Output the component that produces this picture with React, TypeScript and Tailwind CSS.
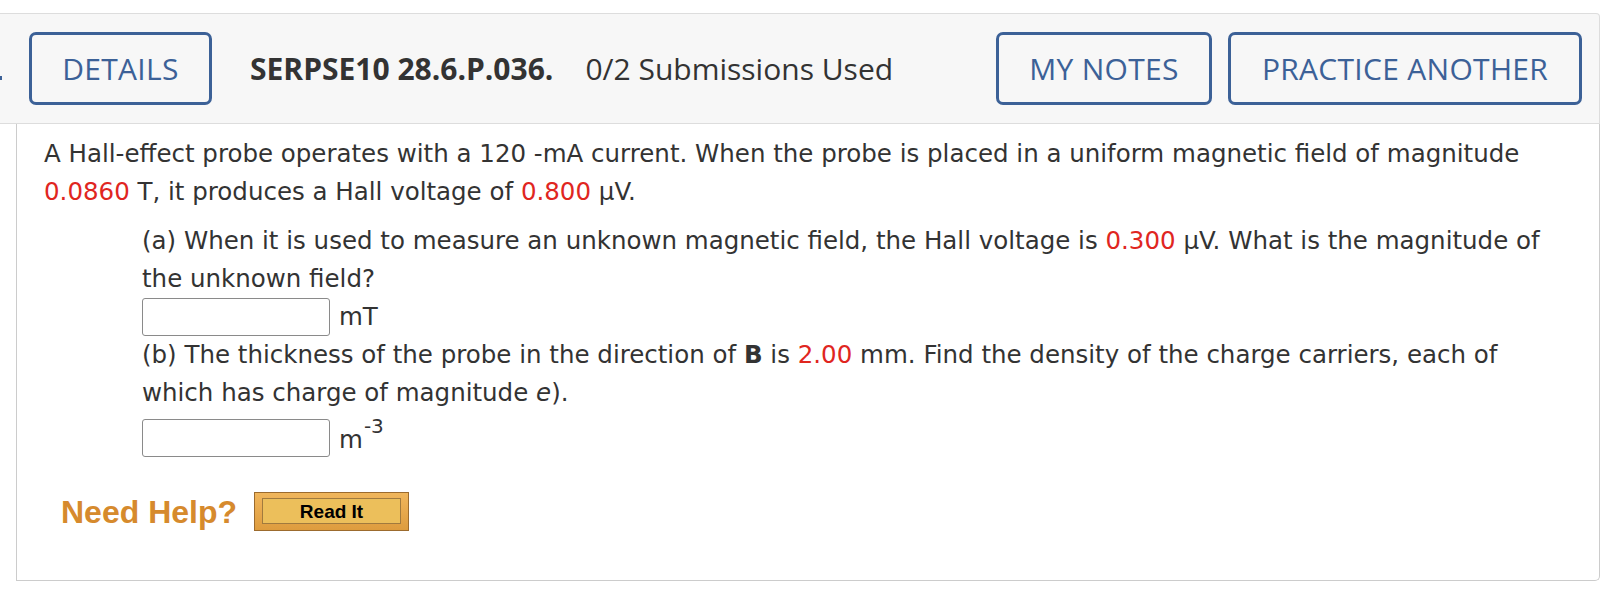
const RED = 'text-[#e0261f]'

function OutlineButton({ label, width }: { label: string; width: string }) {
  return (
    <button
      className={`${width} h-[73px] shrink-0 rounded-[7px] border-[3px] border-[#3c6197] text-center font-['Open_Sans',sans-serif] text-[30px] tracking-[0.3px] text-[#3c6197]`}
    >
      {label}
    </button>
  )
}

function AnswerBox() {
  return (
    <input
      type="text"
      className="h-[38px] w-[188px] rounded-[3px] border border-[#8a8a8a] bg-white"
    />
  )
}

export default function App() {
  return (
    <div className="h-[613px] w-[1624px] bg-white pt-[13px] font-['DejaVu_Sans',Verdana,sans-serif] text-[#333]">
      {/* Header */}
      <div className="mr-[24px] flex h-[111px] items-center rounded-tr-[4px] border-y border-r border-[#dddddd] bg-[#f7f7f7]">
        <span className="mt-[18px] h-[4px] w-[2px] bg-[#3c6197]" />
        <div className="ml-[27px]">
          <OutlineButton label="DETAILS" width="w-[183px]" />
        </div>
        <span className="ml-[38px] font-['Open_Sans',sans-serif] text-[30px] font-bold text-[#333]">
          SERPSE10 28.6.P.036.
        </span>
        <span className="ml-[32px] font-['Open_Sans',sans-serif] text-[30px] text-[#333]">
          0/2 Submissions Used
        </span>
        <div className="flex-1" />
        <div className="mr-[17px] flex gap-[16px]">
          <OutlineButton label="MY NOTES" width="w-[216px]" />
          <OutlineButton label="PRACTICE ANOTHER" width="w-[354px]" />
        </div>
      </div>

      {/* Question card */}
      <div className="ml-[16px] mr-[24px] h-[457px] rounded-br-[5px] border-x border-b border-[#cccccc] pl-[27px] pr-[26px] pt-[11px] text-[24.5px] leading-[38px]">
        <p>
          A Hall-effect probe operates with a 120 -mA current. When the probe is placed in a uniform magnetic field of magnitude{' '}
          <span className={RED}>0.0860</span> T, it produces a Hall voltage of <span className={RED}>0.800</span> µV.
        </p>

        <div className="ml-[98px] mt-[11px]">
          <p>
            (a) When it is used to measure an unknown magnetic field, the Hall voltage is{' '}
            <span className={RED}>0.300</span> µV. What is the magnitude of the unknown field?
          </p>
          <div className="flex h-[38px] items-center gap-[9px]">
            <AnswerBox />
            <span>mT</span>
          </div>

          <p>
            (b) The thickness of the probe in the direction of <b>B</b> is <span className={RED}>2.00</span> mm. Find the
            density of the charge carriers, each of which has charge of magnitude <i>e</i>).
          </p>
          <div className="mt-[7px] flex h-[38px] items-center gap-[9px]">
            <AnswerBox />
            <span className="mt-[4px]">
              m<sup className="top-[-0.75em] ml-[1px] text-[20px]">-3</sup>
            </span>
          </div>
        </div>

        {/* Need help */}
        <div className="ml-[17px] mt-[35px] flex items-center gap-[17px]">
          <span className="font-['Liberation_Sans',Arial,sans-serif] text-[32px] font-bold leading-none text-[#d68a2d]">
            Need Help?
          </span>
          <button className="h-[39px] w-[155px] border border-[#9c6b2e] bg-gradient-to-b from-[#f0b65c] to-[#de9c3e] px-[7px] pb-[6px] pt-[5px]">
            <div className="flex h-full items-center justify-center border border-[#a17a3e] bg-[#ecbf5b] font-['Liberation_Sans',Arial,sans-serif] text-[19px] font-bold leading-none text-black">
              Read It
            </div>
          </button>
        </div>
      </div>
    </div>
  )
}
